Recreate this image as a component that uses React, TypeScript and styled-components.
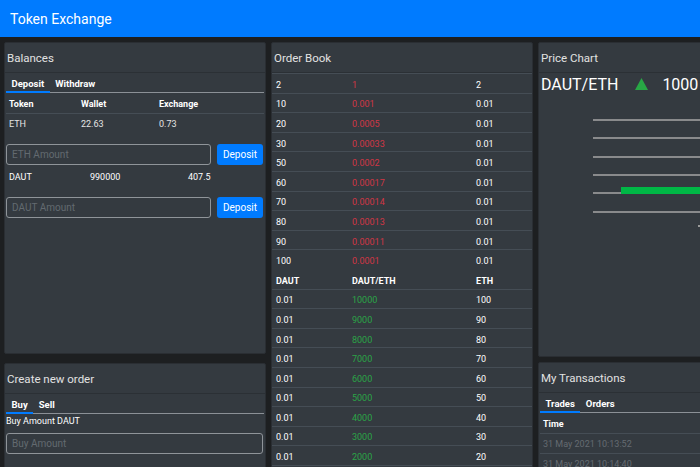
import React from 'react';
import styled, { createGlobalStyle } from 'styled-components';

const GlobalStyle = createGlobalStyle`
  html, body { margin: 0; padding: 0; background: #1d1f21; overflow: hidden; }
  body { font-family: Roboto, "Liberation Sans", Arial, sans-serif; color: #fff; }
  * { box-sizing: border-box; }
`;

const Navbar = styled.nav`
  height: 37px;
  background: #007bff;
  display: flex;
  align-items: center;
  padding: 0 10px;
`;

const Brand = styled.span`
  font-size: 14px;
  color: #fff;
`;

const Content = styled.main`
  display: flex;
  gap: 5px;
  padding: 5px 4px 0;
  width: max-content;
`;

const Column = styled.div<{ $gap: number }>`
  width: 262px;
  flex-shrink: 0;
  display: flex;
  flex-direction: column;
  gap: ${p => p.$gap}px;
`;

const Card = styled.section<{ $height?: number }>`
  background: #343a40;
  border: 1px solid #2a2e33;
  border-radius: 2px;
  height: ${p => (p.$height ? `${p.$height}px` : 'auto')};
  display: flex;
  flex-direction: column;
  overflow: hidden;
`;

const CardHeader = styled.header`
  height: 30px;
  flex-shrink: 0;
  display: flex;
  align-items: center;
  padding: 0 2px;
  font-size: 11.5px;
  color: #e2e2e2;
  border-bottom: 1px solid #2b3035;
`;

const CardBody = styled.div`
  padding: 0 1px;
  display: flex;
  flex-direction: column;
`;

const TabList = styled.div`
  display: flex;
  height: 20px;
  border-bottom: 1px solid #8b9096;
`;

const Tab = styled.span<{ $active?: boolean }>`
  height: 20px;
  padding: 3px 5.5px 0;
  display: flex;
  align-items: center;
  font-size: 9.5px;
  font-weight: 700;
  color: #fff;
  border-bottom: 2px solid ${p => (p.$active ? '#007bff' : 'transparent')};
`;

const Row = styled.div<{ $cols: string; $head?: boolean; $line?: boolean; $h?: number; $pad?: number; $padTop?: number }>`
  display: grid;
  grid-template-columns: ${p => p.$cols};
  height: ${p => p.$h ?? 20}px;
  padding-top: ${p => p.$padTop ?? 0}px;
  align-items: center;
  border-top: 1px solid ${p => (p.$line === false ? 'transparent' : '#454d55')};
  font-size: 9px;
  font-weight: ${p => (p.$head ? 700 : 400)};
  color: ${p => (p.$head ? '#fff' : '#e4e4e4')};
  & > span { padding-left: ${p => p.$pad ?? 3}px; white-space: nowrap; }
`;

const Cell = styled.span<{ $tone?: 'red' | 'green' | 'muted' | 'bright' }>`
  color: ${p =>
    p.$tone === 'red' ? '#d13645' : p.$tone === 'green' ? '#2ba447' : p.$tone === 'muted' ? '#656b71' : p.$tone === 'bright' ? '#fff' : 'inherit'};
`;

const FormRow = styled.div<{ $top: number }>`
  display: flex;
  gap: 6px;
  margin-top: ${p => p.$top}px;
  padding-right: 1px;
`;

const Input = styled.input`
  flex: 1;
  min-width: 0;
  height: 21px;
  border: 1px solid #8f9499;
  border-radius: 3px;
  background: transparent;
  padding: 0 5px;
  font-family: inherit;
  font-size: 10px;
  color: #fff;
  outline: none;
  &::placeholder { color: #636a70; }
`;

const Button = styled.button`
  width: 46px;
  height: 21px;
  border: none;
  border-radius: 3px;
  background: #007bff;
  color: #fff;
  font-family: inherit;
  font-size: 10px;
  padding: 0;
`;

const Label = styled.div`
  height: 14px;
  display: flex;
  align-items: center;
  font-size: 9px;
  color: #fff;
`;

const PairRow = styled.div`
  height: 22px;
  display: flex;
  align-items: center;
  font-size: 16px;
  color: #fff;
  padding-left: 1px;
  white-space: nowrap;
`;

const Arrow = styled.svg`
  margin: 0 14px 0 17px;
  flex-shrink: 0;
`;

const Chart = styled.svg`
  display: block;
`;

const sellOrders: [string, string, string][] = [
  ['2', '1', '2'],
  ['10', '0.001', '0.01'],
  ['20', '0.0005', '0.01'],
  ['30', '0.00033', '0.01'],
  ['50', '0.0002', '0.01'],
  ['60', '0.00017', '0.01'],
  ['70', '0.00014', '0.01'],
  ['80', '0.00013', '0.01'],
  ['90', '0.00011', '0.01'],
  ['100', '0.0001', '0.01'],
];

const buyOrders: [string, string, string][] = [
  ['0.01', '10000', '100'],
  ['0.01', '9000', '90'],
  ['0.01', '8000', '80'],
  ['0.01', '7000', '70'],
  ['0.01', '6000', '60'],
  ['0.01', '5000', '50'],
  ['0.01', '4000', '40'],
  ['0.01', '3000', '30'],
  ['0.01', '2000', '20'],
  ['0.01', '1000', '10'],
];

const OB_COLS = '76px 124px 1fr';
const BAL_COLS = '72px 78px 1fr';

export default function App() {
  const gridY = [120, 138, 157, 175, 193, 212];
  return (
    <>
      <GlobalStyle />
      <Navbar>
        <Brand>Token Exchange</Brand>
      </Navbar>
      <Content>
        <Column $gap={9}>
          <Card $height={312}>
            <CardHeader>Balances</CardHeader>
            <CardBody>
              <TabList>
                <Tab $active>Deposit</Tab>
                <Tab>Withdraw</Tab>
              </TabList>
              <Row $cols={BAL_COLS} $head $line={false}>
                <span>Token</span>
                <span>Wallet</span>
                <span>Exchange</span>
              </Row>
              <Row $cols={BAL_COLS} $h={21}>
                <span>ETH</span>
                <span>22.63</span>
                <span>0.73</span>
              </Row>
              <FormRow $top={10}>
                <Input placeholder="ETH Amount" />
                <Button>Deposit</Button>
              </FormRow>
              <Row $cols="81px 98px 1fr" $line={false} style={{ marginTop: 1 }}>
                <Cell $tone="bright">DAUT</Cell>
                <Cell $tone="bright">990000</Cell>
                <Cell $tone="bright">407.5</Cell>
              </Row>
              <FormRow $top={11}>
                <Input placeholder="DAUT Amount" />
                <Button>Deposit</Button>
              </FormRow>
            </CardBody>
          </Card>
          <Card $height={200}>
            <CardHeader>Create new order</CardHeader>
            <CardBody>
              <TabList>
                <Tab $active>Buy</Tab>
                <Tab>Sell</Tab>
              </TabList>
              <Label>Buy Amount DAUT</Label>
              <FormRow $top={5}>
                <Input placeholder="Buy Amount" />
              </FormRow>
            </CardBody>
          </Card>
        </Column>

        <Column $gap={5}>
          <Card>
            <CardHeader>Order Book</CardHeader>
            <div>
              {sellOrders.map((o, i) => (
                <Row key={`s${i}`} $cols={OB_COLS} $h={19.6} $pad={4} $padTop={3}>
                  <Cell $tone="bright">{o[0]}</Cell>
                  <Cell $tone="red">{o[1]}</Cell>
                  <Cell $tone="bright">{o[2]}</Cell>
                </Row>
              ))}
              <Row $cols={OB_COLS} $h={19.6} $pad={4} $padTop={3} $head $line={false}>
                <span>DAUT</span>
                <span>DAUT/ETH</span>
                <span>ETH</span>
              </Row>
              {buyOrders.map((o, i) => (
                <Row key={`b${i}`} $cols={OB_COLS} $h={19.6} $pad={4} $padTop={3}>
                  <Cell $tone="bright">{o[0]}</Cell>
                  <Cell $tone="green">{o[1]}</Cell>
                  <Cell $tone="bright">{o[2]}</Cell>
                </Row>
              ))}
            </div>
          </Card>
        </Column>

        <Column $gap={5}>
          <Card $height={315}>
            <CardHeader>Price Chart</CardHeader>
            <CardBody>
              <PairRow>
                DAUT/ETH
                <Arrow width="13" height="12" viewBox="0 0 13 12">
                  <polygon points="6.5,0 13,12 0,12" fill="#28a745" />
                </Arrow>
                1000
              </PairRow>
              <Chart width="260" height="150" viewBox="0 0 260 150">
                {gridY.map(y => (
                  <line key={y} x1="53" x2="260" y1={y - 95} y2={y - 95} stroke="#a6a6a6" strokeWidth="1.5" />
                ))}
                <rect x="81" y={187 - 95} width="179" height="7" fill="#00b746" />
                <rect x="158" y={225 - 95} width="3" height="2" fill="#9a9a9a" />
              </Chart>
            </CardBody>
          </Card>
          <Card $height={200}>
            <CardHeader>My Transactions</CardHeader>
            <CardBody>
              <TabList>
                <Tab $active>Trades</Tab>
                <Tab>Orders</Tab>
              </TabList>
              <Row $cols="1fr" $head $line={false}>
                <span>Time</span>
              </Row>
              <Row $cols="1fr">
                <Cell $tone="muted">31 May 2021 10:13:52</Cell>
              </Row>
              <Row $cols="1fr">
                <Cell $tone="muted">31 May 2021 10:14:40</Cell>
              </Row>
            </CardBody>
          </Card>
        </Column>
      </Content>
    </>
  );
}
